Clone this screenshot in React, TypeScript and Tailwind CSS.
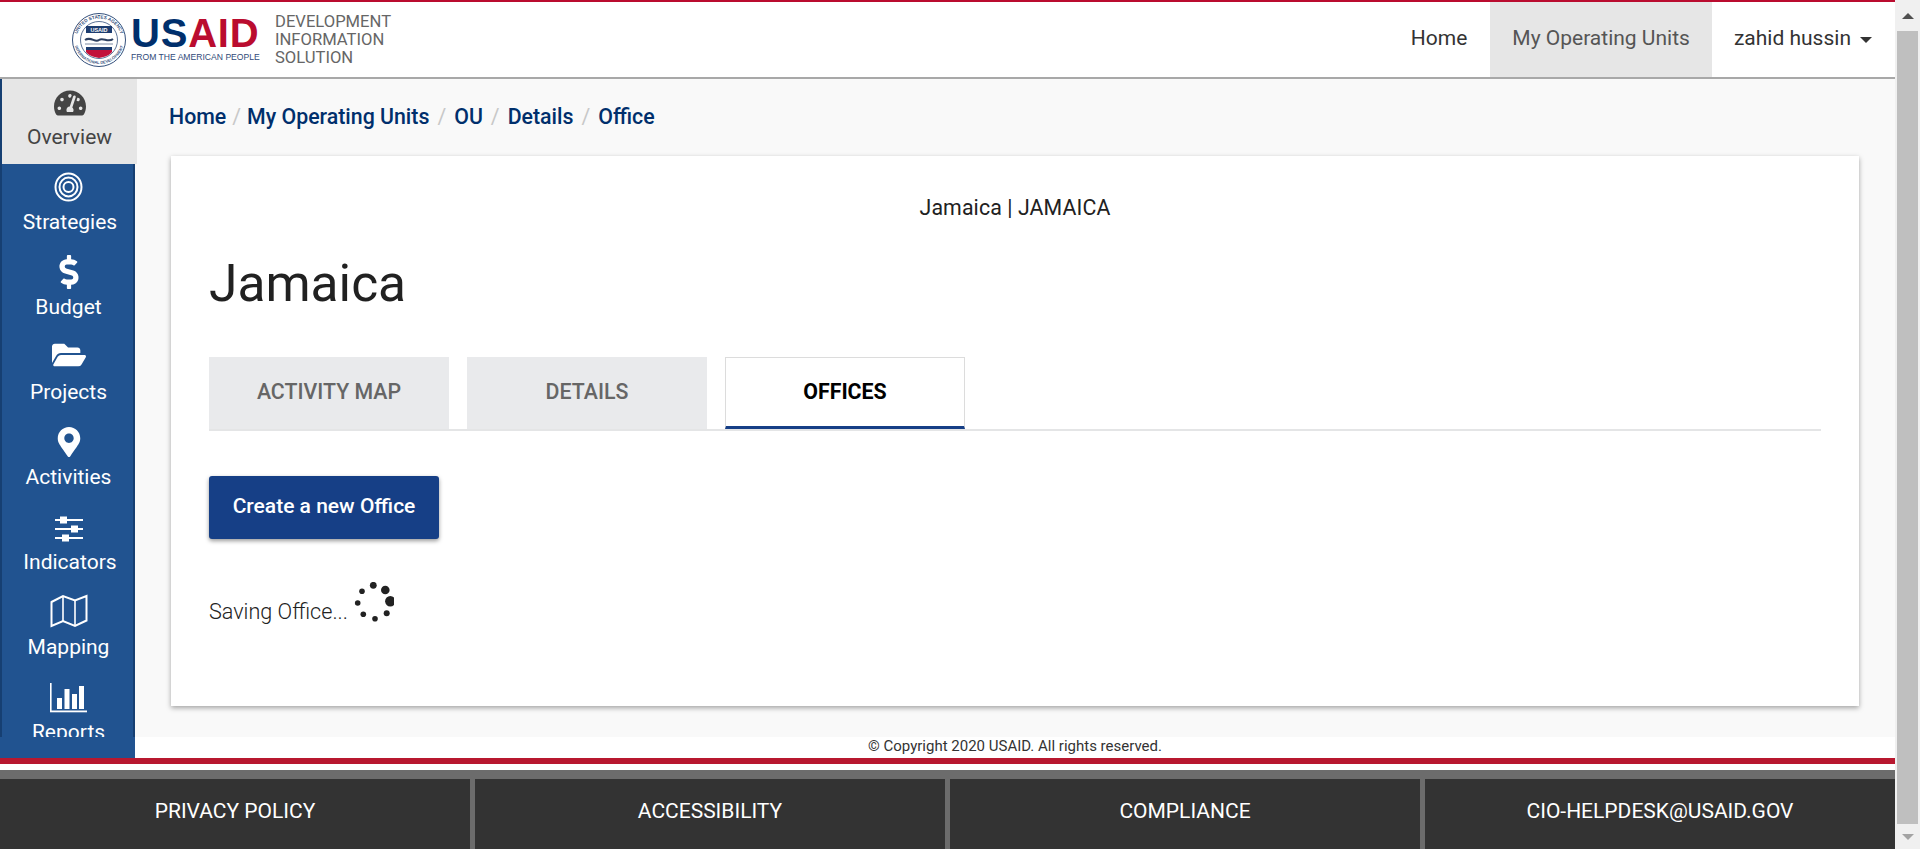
import React from 'react';
import { FaTachometerAlt, FaDollarSign, FaFolderOpen, FaMapMarkerAlt } from 'react-icons/fa';

const TargetIcon = () => (
  <svg width="29" height="30" viewBox="0 0 29 30" fill="none" stroke="white" className="mb-[2px]">
    <ellipse cx="14.5" cy="15" rx="13" ry="13.6" strokeWidth="2" />
    <ellipse cx="14.5" cy="15" rx="9" ry="9.4" strokeWidth="2" />
    <circle cx="14.5" cy="15" r="5" strokeWidth="2" />
  </svg>
);

const SlidersIcon = () => (
  <svg width="30" height="26" viewBox="0 0 30 26" fill="white" className="mb-[2px]">
    <rect x="1" y="3" width="28" height="2" />
    <rect x="1" y="12" width="28" height="2" />
    <rect x="1" y="21" width="28" height="2" />
    <rect x="6" y="0.5" width="7" height="7" />
    <rect x="17" y="9.5" width="7" height="7" />
    <rect x="8" y="18.5" width="7" height="7" />
  </svg>
);

const MapIcon = () => (
  <svg width="38" height="34" viewBox="0 0 38 34" fill="none" stroke="white" strokeWidth="2" className="mb-[1px]">
    <path d="M1.5 8 L13 2 L25 6.5 L36.5 2 V26.5 L25 32 L13 27 L1.5 32 Z" />
    <path d="M13 2 V27 M25 6.5 V32" strokeWidth="1.6" />
  </svg>
);

const ChartIcon = () => (
  <svg width="38" height="30" viewBox="0 0 38 30" fill="white" className="mb-[1px]">
    <rect x="0" y="0" width="1.6" height="29" />
    <rect x="0" y="27.5" width="37" height="1.8" />
    <rect x="7" y="15" width="5" height="11" />
    <rect x="14.5" y="6" width="5" height="20" />
    <rect x="22" y="11" width="5" height="15" />
    <rect x="29" y="3" width="5" height="23" />
  </svg>
);

const navItems = [
  { label: 'Overview', icon: <FaTachometerAlt size={32} />, active: true },
  { label: 'Strategies', icon: <TargetIcon />, nudge: true },
  { label: 'Budget', icon: <FaDollarSign size={34} /> },
  { label: 'Projects', icon: <FaFolderOpen size={34} className="mb-[2px]" /> },
  { label: 'Activities', icon: <FaMapMarkerAlt size={30} className="mb-[2px]" /> },
  { label: 'Indicators', icon: <SlidersIcon />, nudge: true },
  { label: 'Mapping', icon: <MapIcon /> },
  { label: 'Reports', icon: <ChartIcon /> },
];

const crumbs = ['Home', 'My Operating Units', 'OU', 'Details', 'Office'];
const footerLinks = ['PRIVACY POLICY', 'ACCESSIBILITY', 'COMPLIANCE', 'CIO-HELPDESK@USAID.GOV'];

const Seal = () => (
  <svg width="56" height="54" viewBox="0 0 56 54" className="shrink-0">
    <defs>
      <path id="seal-top" d="M5.5 27 A22.5 21.5 0 0 1 50.5 27" />
      <path id="seal-bottom" d="M3 27 A25 24 0 0 0 53 27" />
    </defs>
    <circle cx="28" cy="27" r="26.5" fill="white" stroke="#34507c" strokeWidth="1" />
    <circle cx="28" cy="27" r="18.5" fill="white" stroke="#34507c" strokeWidth="0.8" />
    <text fontSize="4.6" fontWeight="700" fill="#34507c" fontFamily="Liberation Sans, sans-serif" textAnchor="middle">
      <textPath href="#seal-top" startOffset="50%">UNITED STATES AGENCY</textPath>
    </text>
    <text fontSize="4" fontWeight="700" fill="#34507c" fontFamily="Liberation Sans, sans-serif" textAnchor="middle">
      <textPath href="#seal-bottom" startOffset="50%">INTERNATIONAL DEVELOPMENT</textPath>
    </text>
    <rect x="15" y="13" width="26" height="7" fill="#1d3d70" />
    <text x="28" y="18.8" fontSize="5.5" fontWeight="700" fill="white" textAnchor="middle" fontFamily="Liberation Sans, sans-serif">USAID</text>
    <path d="M14 27 C20 23 24 30 28 27 C32 24 37 30 42 26" stroke="#2c3f60" strokeWidth="2" fill="none" />
    <path d="M14 31 H42" stroke="#7d8aa3" strokeWidth="1" />
    <rect x="15" y="34" width="26" height="3" fill="#1d3d70" />
    <path d="M15 37 H41 V39 C39 42 34 44 28 45 C22 44 17 42 15 39 Z" fill="#c2113a" />
  </svg>
);

const UsaidLogo = () => (
  <div className="flex items-center gap-[4px]">
    <Seal />
    <div className="flex w-[127px] flex-col">
      <div className="text-[40px] leading-[33px] font-bold tracking-[0.8px] font-['Liberation_Sans',sans-serif] text-[#002f6c]">
        US<span className="text-[#ba0c2f]">AID</span>
      </div>
      <div className="mt-[1px] text-[8.6px] leading-[12px] whitespace-nowrap text-[#2f4a78] font-['Liberation_Sans',sans-serif]">
        FROM THE AMERICAN PEOPLE
      </div>
    </div>
  </div>
);

const Spinner = () => (
  <svg width="40" height="40" viewBox="0 0 40 40" fill="#222" className="absolute left-[145px] top-[-17px]">
    <circle cx="19.3" cy="3.3" r="3.4" />
    <circle cx="31.3" cy="8" r="4.3" />
    <circle cx="36.3" cy="19.3" r="5.2" />
    <circle cx="32.7" cy="31.3" r="3" />
    <circle cx="21" cy="36.7" r="2.8" />
    <circle cx="9.3" cy="32.3" r="2.8" />
    <circle cx="3.7" cy="21" r="2.8" />
    <circle cx="8" cy="9.3" r="2.8" />
  </svg>
);

export default function App() {
  return (
    <div className="flex h-[849px] w-full overflow-hidden bg-white font-['Roboto',sans-serif]">
      <div className="flex min-w-0 flex-1 flex-col">
        {/* top bar */}
        <header className="flex h-[79px] shrink-0 items-stretch justify-between border-t-2 border-b-2 border-t-[#ba0c2f] border-b-[#a8a8a8] bg-white">
          <div className="flex items-center pl-[71px]">
            <UsaidLogo />
            <div className="ml-[17px] text-[16.6px] leading-[18px] text-[#666]">
              DEVELOPMENT
              <br />
              INFORMATION
              <br />
              SOLUTION
            </div>
          </div>
          <nav className="flex items-stretch text-[21px] text-[#333]">
            <a className="flex items-center px-[23px] pb-[2px]">Home</a>
            <a className="flex items-center bg-[#e6e6e6] px-[22px] pb-[2px] text-[#555]">My Operating Units</a>
            <a className="flex items-center gap-[9px] pl-[22px] pr-[23px] pb-[2px]">
              zahid hussin
              <span className="mt-[2px] h-0 w-0 border-x-[6px] border-t-[6px] border-x-transparent border-t-[#333]" />
            </a>
          </nav>
        </header>

        <div className="flex h-[658px] shrink-0">
          {/* side nav */}
          <aside className="h-full w-[137px] shrink-0 overflow-hidden bg-[#f9f9f9]">
            {navItems.map((item) => (
              <div
                key={item.label}
                className={
                  item.active
                    ? 'flex h-[85px] w-[137px] flex-col items-center border-l-2 border-[#163f72] bg-[#e6e6e6] text-[#444]'
                    : 'flex h-[85px] w-[135px] flex-col items-center border-x-2 border-[#163f72] bg-[#215390] pl-[2px] text-white'
                }
              >
                <div className="flex h-[45px] items-end pb-[5px]">{item.icon}</div>
                <div className={item.nudge ? 'ml-[3px] text-[21px] leading-[26px]' : 'text-[21px] leading-[26px]'}>
                  {item.label}
                </div>
              </div>
            ))}
          </aside>

          {/* page body */}
          <main className="min-w-0 flex-1 bg-[#f9f9f9] pl-[34px] pr-[36px]">
            <div className="-ml-[2px] flex h-[77px] items-center gap-[8px] pb-[2px] text-[21.33px] font-medium text-[#002f6c]">
              {crumbs.map((c, i) => (
                <React.Fragment key={c}>
                  {i > 0 && <span className={i === 1 ? '-mx-[2px] font-normal text-[#c8c8c8]' : 'font-normal text-[#c8c8c8]'}>/</span>}
                  <span>{c}</span>
                </React.Fragment>
              ))}
            </div>

            <section className="h-[550px] bg-white px-[38px] shadow-[0_2px_5px_rgba(0,0,0,0.35)]">
              <p className="pt-[40px] text-center text-[21.33px] leading-[24px] tracking-[0.1px] text-[#212121]">
                Jamaica | JAMAICA
              </p>
              <h1 className="mt-[35px] text-[51.5px] leading-[58px] text-[#212121]">Jamaica</h1>

              <div className="mt-[44px] flex h-[74px] items-start gap-[18px] border-b-2 border-[#e4e5e6]">
                <div className="flex h-[72px] w-[240px] items-center justify-center bg-[#e9eaec] pb-[2px] text-[21.33px] font-medium text-[#666]">
                  ACTIVITY MAP
                </div>
                <div className="flex h-[72px] w-[240px] items-center justify-center bg-[#e9eaec] pb-[2px] text-[21.33px] font-medium text-[#666]">
                  DETAILS
                </div>
                <div className="flex h-[72px] w-[240px] items-center justify-center border border-b-[3px] border-[#dcdcdc] border-b-[#163f86] bg-white text-[21.33px] font-bold text-black">
                  OFFICES
                </div>
              </div>

              <button className="mt-[45px] flex h-[63px] w-[230px] items-center justify-center rounded-[3px] bg-[#163f86] pb-[2px] text-[21px] font-medium text-white shadow-[0_2px_4px_rgba(0,0,0,0.4)]">
                Create a new Office
              </button>

              <div className="relative mt-[60px] text-[21.6px] font-light leading-[26px] text-[#222]">
                Saving Office...
                <Spinner />
              </div>
            </section>
          </main>
        </div>

        {/* strip under the nav */}
        <div className="flex h-[21px] shrink-0">
          <div className="w-[135px] bg-[#215390]" />
          <div className="flex-1 text-center text-[15px] leading-[18px] text-[#333]">
            © Copyright 2020 USAID. All rights reserved.
          </div>
        </div>

        <footer className="flex-1">
          <div className="h-[6px] bg-[#b8182f]" />
          <div className="h-[6px] bg-white" />
          <div className="h-[9px] bg-[#6c6c6c]" />
          <div className="flex h-[70px] bg-[#333] text-[21px] text-white">
            {footerLinks.map((link, i) => (
              <div
                key={link}
                className={
                  i < 3
                    ? 'flex w-[475px] items-center justify-center border-r-[5px] border-[#6c6c6c] pb-[5px]'
                    : 'flex flex-1 items-center justify-center pb-[5px]'
                }
              >
                {link}
              </div>
            ))}
          </div>
        </footer>
      </div>

      {/* window scrollbar */}
      <div className="flex w-[25px] shrink-0 flex-col items-center bg-[#f0f0f0]">
        <div className="flex h-[31px] items-center">
          <span className="h-0 w-0 border-x-[6px] border-b-[6px] border-x-transparent border-b-[#505050]" />
        </div>
        <div className="w-[21px] flex-1 bg-[#bfbfbf]" />
        <div className="flex h-[25px] items-center">
          <span className="h-0 w-0 border-x-[6px] border-t-[6px] border-x-transparent border-t-[#a3a3a3]" />
        </div>
      </div>
    </div>
  );
}
